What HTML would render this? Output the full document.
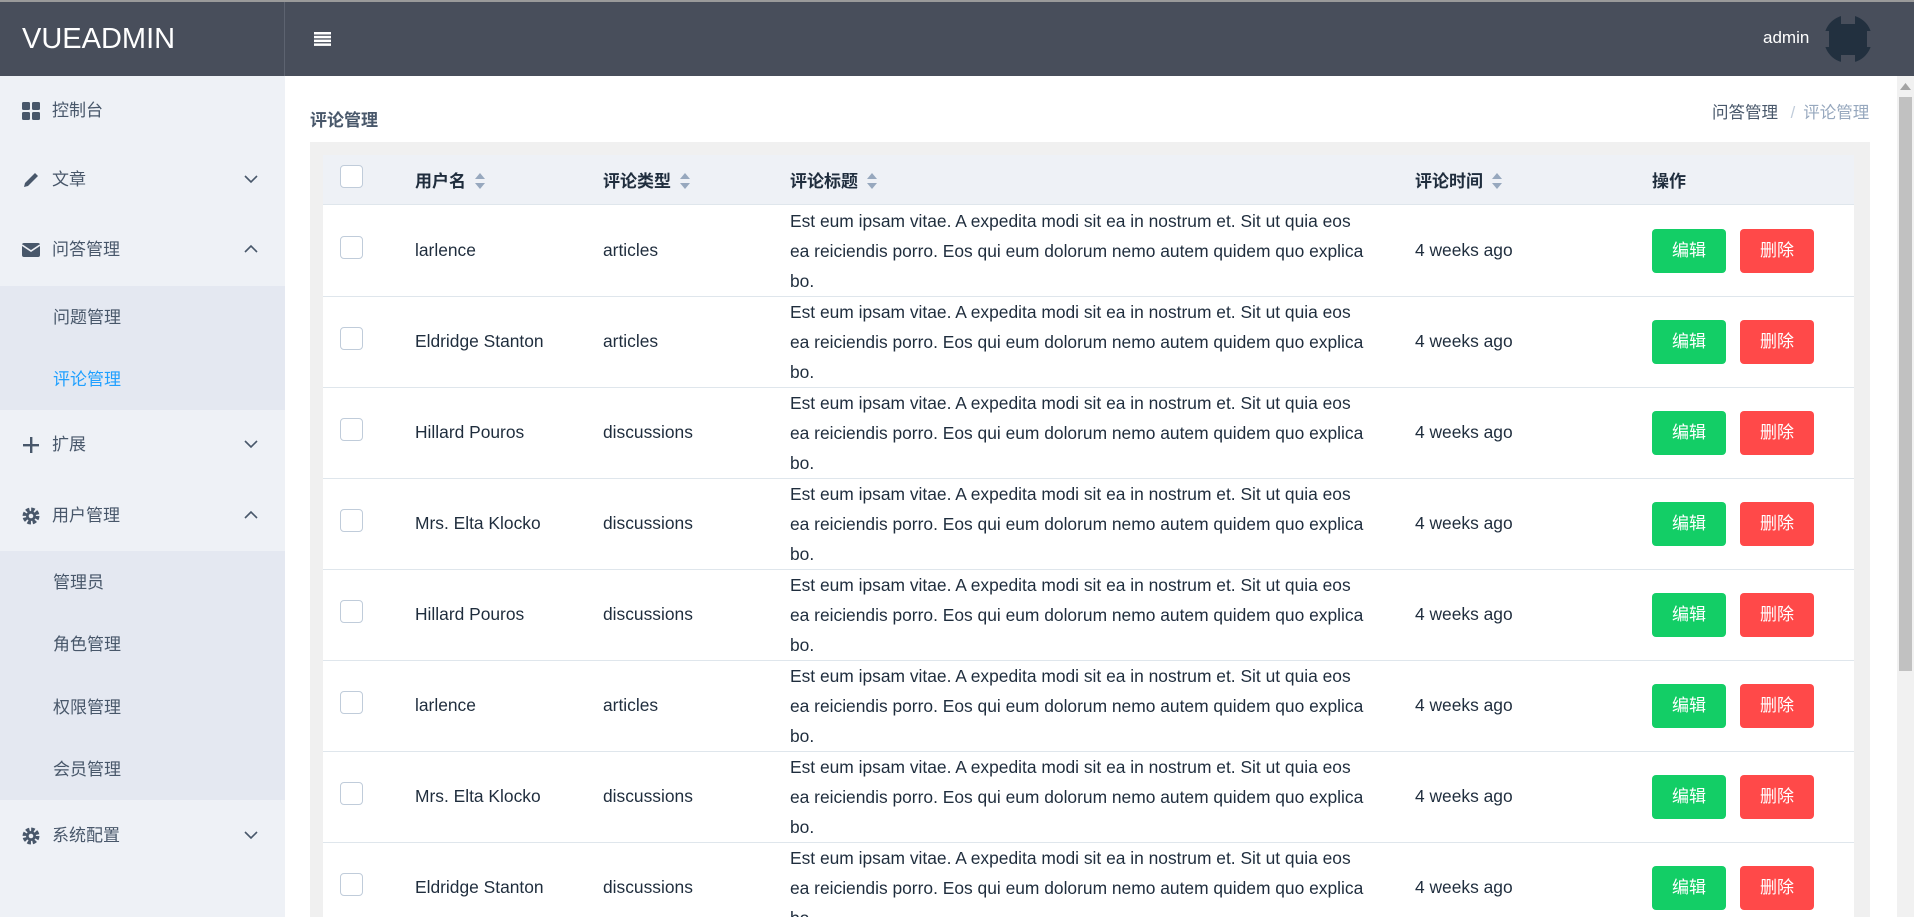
<!DOCTYPE html>
<html><head><meta charset="utf-8"><style>
*{margin:0;padding:0;box-sizing:border-box}
html,body{width:1914px;height:917px;overflow:hidden;background:#fff;font-family:"Liberation Sans","Noto Sans CJK SC",sans-serif;color:#1f2d3d;position:relative}
.hd{position:absolute;left:0;top:0;width:1914px;height:76px;background:#484e5b;border-top:2px solid #9a9a9a}
.logo{position:absolute;left:0;top:0;width:285px;height:74px;border-right:1px solid #5d6370;color:#fff;font-size:29px;line-height:74px;padding-left:22px}
.side{position:absolute;left:0;top:76px;width:285px;height:841px;background:#eef1f6}
.mi{position:absolute;left:0;width:285px;height:60px;font-size:17px;color:#48576a;line-height:60px;padding-left:52px}
.mi svg.ic{position:absolute;left:22px;top:21px}
.mi .ch{position:absolute;left:244px;top:24px}
.sub{position:absolute;left:0;width:285px;background:#e4e8f1}
.si{position:absolute;left:53px;font-size:17px;color:#48576a}
.sb{position:absolute;right:0;top:76px;width:17px;height:841px;background:#f1f1f1}
.th{position:absolute;left:2px;top:21px;width:13px;height:574px;background:#c1c1c1}
.box{position:absolute;left:310px;top:142px;width:1560px;height:775px;background:#f0f0f0}
.tbl{position:absolute;left:323px;top:155px;width:1531px;height:762px;background:#fff;overflow:hidden}
.thd{position:absolute;left:0;top:0;width:1531px;height:50px;background:#eef1f6;border-bottom:1px solid #dfe6ec}
.hc{position:absolute;top:12px;font-size:17px;font-weight:bold;color:#1f2d3d}
.ar{display:inline-block;vertical-align:middle;margin-left:8px;width:12px;height:18px;position:relative;top:-2px}
.cb{position:absolute;width:23px;height:23px;border:1px solid #c0ccda;border-radius:4px;background:#fff}
.row{position:absolute;left:0;width:1531px;height:91px;border-bottom:1px solid #dfe6ec;font-size:17.4px;color:#1f2d3d}
.c{position:absolute;top:34px}
.tx{position:absolute;left:467px;top:0;width:578px;line-height:30px}
.b{position:absolute;top:23px;width:74px;height:44px;border-radius:4px;color:#fff;font-size:17px;text-align:center;line-height:44px}
</style></head><body>
<div class="hd"><div class="logo">VUEADMIN</div>
<svg style="position:absolute;left:314px;top:30px" width="17" height="14"><rect y="0" width="17" height="2.5" fill="#fff"/><rect y="3.8" width="17" height="2.5" fill="#fff"/><rect y="7.6" width="17" height="2.5" fill="#fff"/><rect y="11.4" width="17" height="2.5" fill="#fff"/></svg>
<div style="position:absolute;left:1763px;top:26px;color:#fff;font-size:17px">admin</div>
<svg style="position:absolute;left:1822px;top:12px" width="52" height="50"><circle cx="26" cy="25" r="24" fill="#22303f"/><rect x="0" y="17" width="7" height="16" fill="#484e5b"/><rect x="45" y="17" width="7" height="16" fill="#484e5b"/><rect x="19" y="0" width="14" height="10" fill="#484e5b"/><rect x="19" y="41" width="14" height="9" fill="#484e5b"/></svg>
</div>
<div class="side">
<div class="mi" style="top:5px"><svg class="ic" width="18" height="18"><rect width="8" height="8" rx="1.5" fill="#48576a"/><rect x="10" width="8" height="8" rx="1.5" fill="#48576a"/><rect y="10" width="8" height="8" rx="1.5" fill="#48576a"/><rect x="10" y="10" width="8" height="8" rx="1.5" fill="#48576a"/></svg>控制台</div>
<div class="mi" style="top:74px"><svg class="ic" width="18" height="18"><path d="M2 16 L3 12 L13 2 L16 5 L6 15 Z" fill="#48576a"/></svg>文章<svg class="ch" width="14" height="10"><path d="M1 2 L7 8 L13 2" stroke="#48576a" stroke-width="1.6" fill="none"/></svg></div>
<div class="mi" style="top:144px"><svg class="ic" width="18" height="18"><rect y="2" width="18" height="14" rx="2" fill="#48576a"/><path d="M0 4 L9 10 L18 4" stroke="#eef1f6" stroke-width="1.6" fill="none"/></svg>问答管理<svg class="ch" width="14" height="10"><path d="M1 8 L7 2 L13 8" stroke="#48576a" stroke-width="1.6" fill="none"/></svg></div>
<div class="sub" style="top:210px;height:124px"><div class="si" style="top:17px">问题管理</div><div class="si" style="top:79px;color:#20a0ff">评论管理</div></div>
<div class="mi" style="top:339px"><svg class="ic" width="18" height="18"><rect x="8" y="1" width="2.4" height="16" fill="#48576a"/><rect x="1" y="8" width="16" height="2.4" fill="#48576a"/></svg>扩展<svg class="ch" width="14" height="10"><path d="M1 2 L7 8 L13 2" stroke="#48576a" stroke-width="1.6" fill="none"/></svg></div>
<div class="mi" style="top:410px"><svg class="ic" width="18" height="18"><circle cx="9" cy="9" r="6.5" fill="none" stroke="#48576a" stroke-width="4" stroke-dasharray="3.4 1.7"/><circle cx="9" cy="9" r="5" fill="#48576a"/><circle cx="9" cy="9" r="2.3" fill="#eef1f6"/></svg>用户管理<svg class="ch" width="14" height="10"><path d="M1 8 L7 2 L13 8" stroke="#48576a" stroke-width="1.6" fill="none"/></svg></div>
<div class="sub" style="top:475px;height:249px"><div class="si" style="top:17px">管理员</div><div class="si" style="top:79px">角色管理</div><div class="si" style="top:142px">权限管理</div><div class="si" style="top:204px">会员管理</div></div>
<div class="mi" style="top:730px"><svg class="ic" width="18" height="18"><circle cx="9" cy="9" r="6.5" fill="none" stroke="#48576a" stroke-width="4" stroke-dasharray="3.4 1.7"/><circle cx="9" cy="9" r="5" fill="#48576a"/><circle cx="9" cy="9" r="2.3" fill="#eef1f6"/></svg>系统配置<svg class="ch" width="14" height="10"><path d="M1 2 L7 8 L13 2" stroke="#48576a" stroke-width="1.6" fill="none"/></svg></div>
</div>
<div style="position:absolute;left:310px;top:106px;font-size:17px;font-weight:bold;color:#48576a">评论管理</div>
<div style="position:absolute;left:1712px;top:99px;font-size:16.5px;color:#48576a;white-space:nowrap">问答管理 <span style="color:#c0ccda;margin:0 8px">/</span><span style="color:#97a8be">评论管理</span></div>
<div class="box"></div>
<div class="tbl">
<div class="thd">
<div class="cb" style="left:17px;top:10px"></div>
<div class="hc" style="left:92px">用户名<svg class="ar" viewBox="0 0 12 18"><path d="M6 1 L11 7 H1Z M6 17 L11 11 H1Z" fill="#97a8be"/></svg></div>
<div class="hc" style="left:280px">评论类型<svg class="ar" viewBox="0 0 12 18"><path d="M6 1 L11 7 H1Z M6 17 L11 11 H1Z" fill="#97a8be"/></svg></div>
<div class="hc" style="left:467px">评论标题<svg class="ar" viewBox="0 0 12 18"><path d="M6 1 L11 7 H1Z M6 17 L11 11 H1Z" fill="#97a8be"/></svg></div>
<div class="hc" style="left:1092px">评论时间<svg class="ar" viewBox="0 0 12 18"><path d="M6 1 L11 7 H1Z M6 17 L11 11 H1Z" fill="#97a8be"/></svg></div>
<div class="hc" style="left:1329px">操作</div>
</div>
<div id="rows"></div>
</div>
<div class="sb"><svg style="position:absolute;left:3px;top:7px" width="11" height="7"><path d="M0 7 L5.5 0 L11 7Z" fill="#a3a3a3"/></svg><div class="th"></div></div>
<script>
var d=[["larlence","articles"],["Eldridge Stanton","articles"],["Hillard Pouros","discussions"],["Mrs. Elta Klocko","discussions"],["Hillard Pouros","discussions"],["larlence","articles"],["Mrs. Elta Klocko","discussions"],["Eldridge Stanton","discussions"]];
var h="";
d.forEach(function(r,i){h+='<div class="row" style="top:'+(51+91*i)+'px"><div class="cb" style="left:17px;top:30px"></div><div class="c" style="left:92px">'+r[0]+'</div><div class="c" style="left:280px">'+r[1]+'</div><div class="tx">Est eum ipsam vitae. A expedita modi sit ea in nostrum et. Sit ut quia eos ea reiciendis porro. Eos qui eum dolorum nemo autem quidem quo explica bo.</div><div class="c" style="left:1092px">4 weeks ago</div><div class="b" style="left:1329px;background:#13ce66">编辑</div><div class="b" style="left:1417px;background:#ff4949">删除</div></div>';});
document.getElementById("rows").innerHTML=h;
</script>
</body></html>
